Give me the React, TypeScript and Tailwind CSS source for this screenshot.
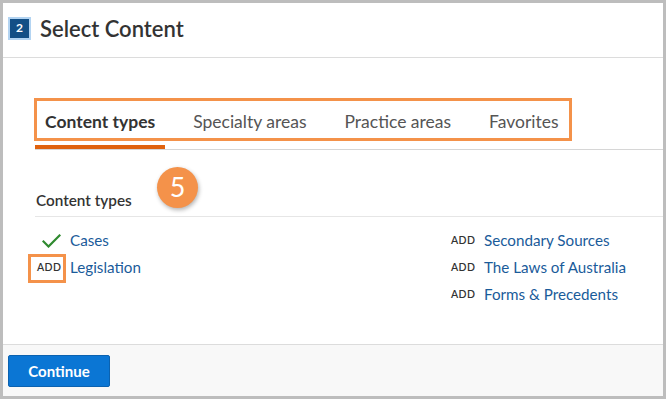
import React from 'react'

const font = { fontFamily: '"Lato", "Open Sans", sans-serif' }

const tabs = ['Content types', 'Specialty areas', 'Practice areas', 'Favorites']

function CheckIcon() {
  return (
    <svg width="19" height="14" viewBox="0 0 19 14" fill="none">
      <path d="M1.5 7.5l5 5L17.5 1.5" stroke="#2f8a2f" strokeWidth={2.2} strokeLinecap="square" />
    </svg>
  )
}

function Item({ label, added, boxed }: { label: string; added?: boolean; boxed?: boolean }) {
  return (
    <div className="relative flex h-[27px] items-center">
      <div className="flex w-[35px] items-center justify-start pl-[2px]">
        {added ? (
          <span className="pl-[5px]">
            <CheckIcon />
          </span>
        ) : (
          <span className="text-[10.5px] font-semibold tracking-[0.4px] text-[#333]">ADD</span>
        )}
      </div>
      <span className="text-[15.2px] text-[#1a5b9a]">{label}</span>
      {boxed && <div className="absolute left-[-7px] top-0 h-[29px] w-[38px] border-[3px] border-[#f4924a]" />}
    </div>
  )
}

export default function App() {
  return (
    <div style={font} className="flex h-[399px] w-[666px] flex-col border-[3px] border-[#bdbdbd] bg-white">
      <div className="flex h-[55px] items-center gap-[9px] border-b border-[#dcdcdc] px-[5px] pb-[4px]">
        <div className="flex h-[23px] w-[23px] items-center justify-center border-2 border-[#b3d4f2] bg-[#134f86] text-[12px] font-bold text-white">
          2
        </div>
        <h1 className="text-[22px] font-semibold text-[#333]">Select Content</h1>
      </div>

      <div className="flex-1 pl-[32px] pt-[41px]">
        <div className="relative flex gap-[18px] border-b border-[#d6d6d6]">
          {tabs.map((t, i) => (
            <div
              key={t}
              className={`flex h-[50px] items-center px-[10px] text-[17.5px] ${
                i === 0 ? 'border-b-4 border-[#e0620e] font-bold text-[#333]' : 'border-b-4 border-transparent text-[#555]'
              }`}
            >
              {t}
            </div>
          ))}
          <div className="absolute left-[-1px] top-[-1px] h-[43px] w-[538px] border-[3px] border-[#f4924a]" />
        </div>

        <div className="relative mt-[38px] border-b border-[#e6e6e6] pb-[4px]">
          <div className="h-[24px] pl-px text-[15.3px] font-semibold leading-[24px] text-[#333]">Content types</div>
          <div className="absolute left-[122px] top-[-21px] flex h-[41px] w-[41px] items-center justify-center rounded-full bg-[#f4924a] text-[27px] text-white shadow-[1px_2px_4px_rgba(0,0,0,0.3)]">
            5
          </div>
        </div>

        <div className="mt-[10px] flex">
          <div className="w-[414px]">
            <Item label="Cases" added />
            <Item label="Legislation" boxed />
          </div>
          <div>
            <Item label="Secondary Sources" />
            <Item label="The Laws of Australia" />
            <Item label="Forms &amp; Precedents" />
          </div>
        </div>
      </div>

      <div className="flex h-[52px] items-start border-t border-[#dcdcdc] bg-[#f8f8f8] px-[5px] pt-[10px]">
        <button className="h-[32px] w-[102px] rounded-[2px] border border-[#0b62b0] bg-[#0b76d4] text-[15px] font-bold text-white">
          Continue
        </button>
      </div>
    </div>
  )
}
